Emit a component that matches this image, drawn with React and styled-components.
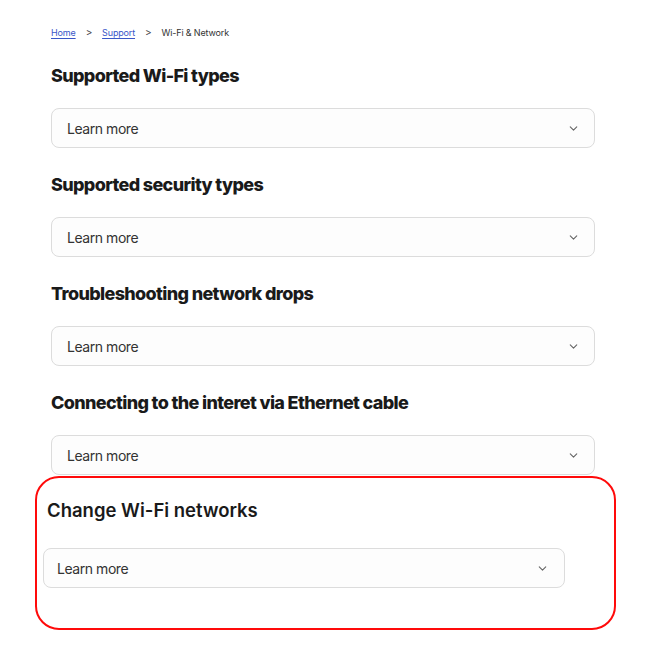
import React from 'react'
import styled, { createGlobalStyle } from 'styled-components'
import { ChevronDown } from 'lucide-react'

const GlobalStyle = createGlobalStyle`
  body {
    margin: 0;
    background: #fff;
    font-family: Inter, "Noto Sans", sans-serif;
    color: #1c1c1c;
  }
`

const topics = [
  'Supported Wi-Fi types',
  'Supported security types',
  'Troubleshooting network drops',
  'Connecting to the interet via Ethernet cable',
]

const Page = styled.main`
  width: 544px;
  margin-left: 51px;
  padding-top: 25px;
  display: flex;
  flex-direction: column;
`

const Crumbs = styled.nav`
  display: flex;
  align-items: center;
  gap: 10px;
  height: 14px;
  font-size: 9px;
  letter-spacing: -0.15px;
  color: #333;
  margin-bottom: 25px;
`

const CrumbLink = styled.a`
  color: #3a56c8;
  text-decoration: underline;
  text-underline-offset: 2px;
`

const Sep = styled.span`
  font-size: 10px;
  color: #444;
`

const Section = styled.section`
  display: flex;
  flex-direction: column;
  margin-bottom: 25px;
`

const Heading = styled.h2`
  margin: 0 0 20px;
  font-size: 18px;
  line-height: 24px;
  font-weight: 800;
  letter-spacing: -0.65px;
  color: #1a1a1a;
`

const Accordion = styled.button`
  box-sizing: border-box;
  display: flex;
  align-items: center;
  justify-content: space-between;
  width: 100%;
  height: 40px;
  padding: 0 ${p => (p.$compact ? 15 : 14)}px 0 ${p => (p.$compact ? 13 : 15)}px;
  background: #fdfdfd;
  border: 1px solid #dcdcdc;
  border-radius: 8px;
  font-family: Inter, "Noto Sans", sans-serif;
  font-size: 14px;
  letter-spacing: -0.45px;
  color: #333;
  cursor: pointer;
`

const Highlight = styled.section`
  box-sizing: border-box;
  width: 581px;
  margin: -24px 0 0 -16px;
  padding: 20px 49px 40px 6px;
  border: 2px solid #ff0a0a;
  border-radius: 24px;
  display: flex;
  flex-direction: column;
`

const HighlightHeading = styled.h2`
  margin: 0 0 26px 4px;
  font-size: 18.5px;
  line-height: 24px;
  font-weight: 600;
  letter-spacing: 0;
  color: #1a1a1a;
`

const LearnMore = ({ compact }) => (
  <Accordion $compact={compact}>
    <span>Learn more</span>
    <ChevronDown size={13} strokeWidth={2} color="#666" />
  </Accordion>
)

export default function App() {
  return (
    <>
      <GlobalStyle />
      <Page>
        <Crumbs>
          <CrumbLink href="#">Home</CrumbLink>
          <Sep>&gt;</Sep>
          <CrumbLink href="#">Support</CrumbLink>
          <Sep>&gt;</Sep>
          <span>Wi-Fi &amp; Network</span>
        </Crumbs>
        {topics.map(t => (
          <Section key={t}>
            <Heading>{t}</Heading>
            <LearnMore />
          </Section>
        ))}
        <Highlight>
          <HighlightHeading>Change Wi-Fi networks</HighlightHeading>
          <LearnMore compact />
        </Highlight>
      </Page>
    </>
  )
}
